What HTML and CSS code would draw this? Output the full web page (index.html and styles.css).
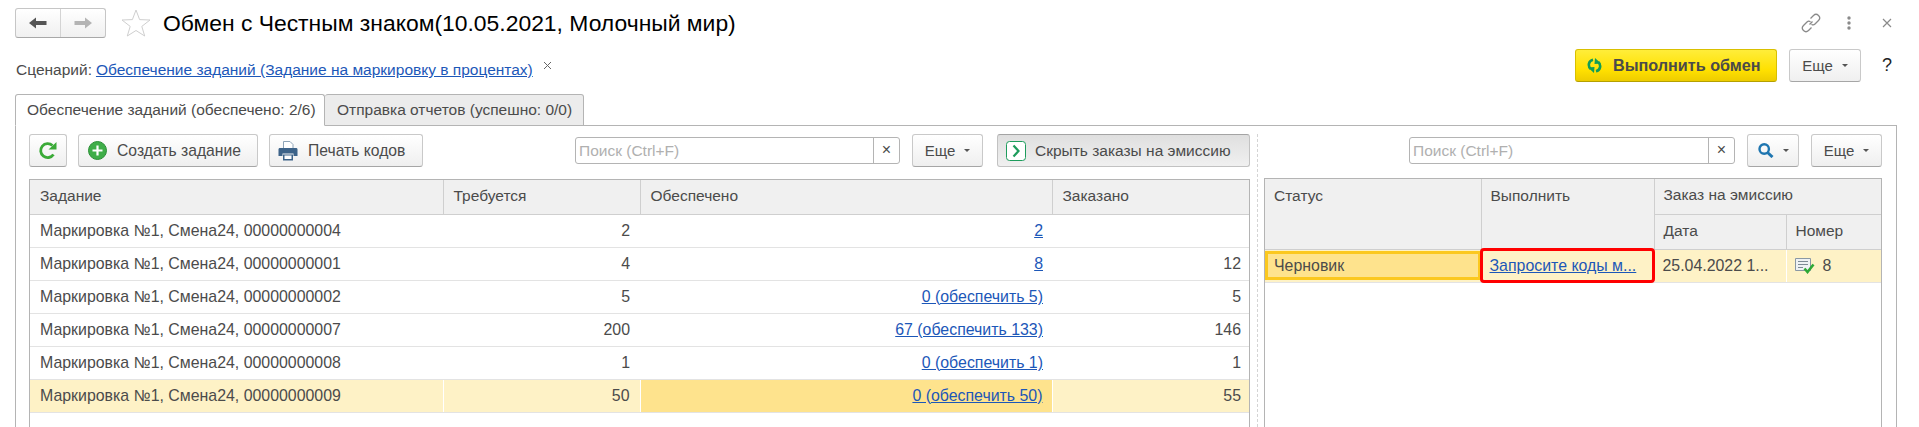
FILE: index.html
```html
<!DOCTYPE html>
<html lang="ru">
<head>
<meta charset="utf-8">
<title>Обмен с Честным знаком</title>
<link rel="stylesheet" href="styles.css">
</head>
<body>

<div class="titlebar">
	<div class="nav">
		<a class="nav-btn" href="#"><svg width="18" height="12" viewBox="0 0 18 12"><path d="M0 6 7 0.5V4H17.500V8H7V11.500Z" fill="#555"/></svg></a>
		<a class="nav-btn" href="#"><svg width="18" height="12" viewBox="0 0 18 12"><path d="M18 6 11 0.5V4H0.500V8H11V11.500Z" fill="#b4b4b4"/></svg></a>
	</div>
	<svg class="star" width="30" height="28" viewBox="0 0 30 28"><path d="M15 1 18.600 10.600 29 11 20.800 17.400 23.700 27 15 21.500 6.300 27 9.200 17.400 1 11 11.400 10.600Z" fill="#fff" stroke="#cfcfcf"/></svg>
	<h1 class="title">Обмен с Честным знаком(10.05.2021, Молочный мир)</h1>
	<div class="win-icons">
		<svg width="20" height="20" viewBox="0 0 20 20" fill="none" stroke="#8a8a8a" stroke-width="1.300"><path d="M8.500 11.500 11.500 8.500M9.500 5.500 12.500 2.500C14 1 16 1 17.500 2.500S19 6 17.500 7.500L14 11C13 12 11.500 12 10.500 11.200M10.500 14.500 7.500 17.500C6 19 4 19 2.500 17.500S1 14 2.500 12.500L6 9C7 8 8.500 8 9.500 8.800"/></svg>
		<svg class="dots" width="4" height="14" viewBox="0 0 4 14" fill="#8a8a8a"><circle cx="2" cy="2" r="1.700"/><circle cx="2" cy="7" r="1.700"/><circle cx="2" cy="12" r="1.700"/></svg>
		<svg class="close" width="10" height="10" viewBox="0 0 10 10" stroke="#8a8a8a" stroke-width="1.200"><path d="M1 1 9 9M9 1 1 9"/></svg>
	</div>
</div>

<div class="scenario">
	<span class="scenario-label">Сценарий:</span>
	<a class="link scenario-link" href="#">Обеспечение заданий (Задание на маркировку в процентах)</a>
	<svg class="scenario-x" width="9" height="9" viewBox="0 0 9 9" stroke="#666"><path d="M1 1 8 8M8 1 1 8"/></svg>
	<a class="btn btn-main" href="#">
		<svg width="15" height="15" viewBox="0 0 15 15" fill="none" stroke="#0f9d58" stroke-width="2.600"><path d="M6 1.800C1.500 2.800 0.500 8 3.800 11"/><path d="M9 13.200C13.500 12.200 14.500 7 11.200 4"/><path d="M1 9.500 7.500 9 7 15Z M14 5.500 7.500 6 8 0Z" fill="#0f9d58" stroke="none"/></svg>
		Выполнить обмен
	</a>
	<a class="btn btn-more btn-top-more" href="#">Еще <i class="caret"></i></a>
	<span class="help">?</span>
</div>

<div class="tabs">
	<a class="tab tab-active" href="#">Обеспечение заданий (обеспечено: 2/6)</a>
	<a class="tab" href="#">Отправка отчетов (успешно: 0/0)</a>
</div>

<div class="panel">
	<div class="pane">
		<div class="toolbar">
			<a class="btn btn-refresh" href="#"><svg width="20" height="20" viewBox="0 0 20 20" fill="none"><path d="M15.500 13.500A7 7 0 1 1 14.500 4.500" stroke="#3bab38" stroke-width="2.800"/><path d="M10.500 8.500H18.500V1Z" fill="#3bab38"/></svg></a>
			<a class="btn btn-create" href="#"><svg width="19" height="19" viewBox="0 0 19 19"><circle cx="9.500" cy="9.500" r="9" fill="#3fae49" stroke="#2b8f36"/><path d="M9.500 4.500V14.500M4.500 9.500H14.500" stroke="#fff" stroke-width="2.200"/></svg>Создать задание</a>
			<a class="btn btn-print" href="#"><svg width="20" height="20" viewBox="0 0 20 20"><path d="M5.500 0.500H12L15 3.500V8H5.500Z" fill="#fff" stroke="#8ea4b8"/><path d="M0.500 8.500C0.500 7.500 1 7 2 7H18C19 7 19.500 7.500 19.500 8.500V15H15.500V12.500H4.500V15H0.500Z" fill="#3d6389"/><path d="M5 13.500H15V19.500H5Z" fill="#3d6389"/><path d="M6.500 14.500H13.500V18H6.500Z" fill="#fff"/></svg>Печать кодов</a>
			<div class="search search-left">
				<span class="search-text">Поиск (Ctrl+F)</span>
				<span class="search-clear">×</span>
			</div>
			<a class="btn btn-more btn-more-left" href="#">Еще <i class="caret"></i></a>
			<a class="btn btn-toggle" href="#"><svg width="20" height="20" viewBox="0 0 20 20" fill="#fff"><rect x="0.500" y="0.500" width="19" height="19" rx="3" stroke="#1d9c5c"/><path d="M7.500 4.500 12.500 10 7.500 15.500" fill="none" stroke="#1d9c5c" stroke-width="2.200"/></svg>Скрыть заказы на эмиссию</a>
		</div>
		<div class="grid-wrap">
			<table class="grid grid-left">
				<colgroup><col class="col-task"><col class="col-need"><col class="col-done"><col class="col-ordered"></colgroup>
				<thead>
					<tr><th>Задание</th><th>Требуется</th><th>Обеспечено</th><th>Заказано</th></tr>
				</thead>
				<tbody>
					<tr><td>Маркировка №1, Смена24, 00000000004</td><td class="num">2</td><td class="num done"><a class="link" href="#">2</a></td><td class="num"></td></tr>
					<tr><td>Маркировка №1, Смена24, 00000000001</td><td class="num">4</td><td class="num done"><a class="link" href="#">8</a></td><td class="num">12</td></tr>
					<tr><td>Маркировка №1, Смена24, 00000000002</td><td class="num">5</td><td class="num done"><a class="link" href="#">0 (обеспечить 5)</a></td><td class="num">5</td></tr>
					<tr><td>Маркировка №1, Смена24, 00000000007</td><td class="num">200</td><td class="num done"><a class="link" href="#">67 (обеспечить 133)</a></td><td class="num">146</td></tr>
					<tr><td>Маркировка №1, Смена24, 00000000008</td><td class="num">1</td><td class="num done"><a class="link" href="#">0 (обеспечить 1)</a></td><td class="num">1</td></tr>
					<tr class="row-current"><td>Маркировка №1, Смена24, 00000000009</td><td class="num">50</td><td class="num done cell-current"><a class="link" href="#">0 (обеспечить 50)</a></td><td class="num">55</td></tr>
				</tbody>
			</table>
		</div>
	</div>

	<div class="splitter"></div>

	<div class="pane">
		<div class="toolbar toolbar-right">
			<div class="search search-right">
				<span class="search-text">Поиск (Ctrl+F)</span>
				<span class="search-clear">×</span>
			</div>
			<a class="btn btn-find" href="#"><svg width="16" height="15" viewBox="0 0 16 15" fill="none" stroke="#1f76b0"><circle cx="6.200" cy="6" r="4.700" stroke-width="2.400"/><path d="M9.500 9.500 14.500 14" stroke-width="3"/></svg><i class="caret"></i></a>
			<a class="btn btn-more btn-more-right" href="#">Еще <i class="caret"></i></a>
		</div>
		<div class="grid-wrap grid-wrap-right">
			<table class="grid grid-right">
				<colgroup><col class="col-status"><col class="col-run"><col class="col-date"><col class="col-number"></colgroup>
				<thead>
					<tr class="head-top"><th rowspan="2" class="th-tall">Статус</th><th rowspan="2" class="th-tall">Выполнить</th><th colspan="2">Заказ на эмиссию</th></tr>
					<tr class="head-sub"><th>Дата</th><th>Номер</th></tr>
				</thead>
				<tbody>
					<tr class="row-current">
						<td class="cell-focus"><div class="focus-box">Черновик</div></td>
						<td class="cell-alert"><a class="link" href="#">Запросите коды м...</a></td>
						<td>25.04.2022 1...</td>
						<td><svg class="doc" width="20" height="16" viewBox="0 0 20 16"><path d="M0.500 0.500H15.500V12.500H0.500Z" fill="#eef1f3" stroke="#8a98a4"/><path d="M3 3.500H13M3 6.500H13M3 9.500H8" stroke="#7d8a94"/><path d="M9.500 10.500 12.500 14 18.500 6.500" fill="none" stroke="#2ea836" stroke-width="2.600"/></svg>8</td>
					</tr>
				</tbody>
			</table>
		</div>
	</div>
</div>

</body>
</html>
```

FILE: styles.css
```css
*{margin:0;padding:0;box-sizing:border-box;}
html,body{height:427px;overflow:hidden;}
body{background:#fff;font-family:"Liberation Sans",Arial,sans-serif;font-size:15.5px;color:#4b4b4b;}
a{text-decoration:none;color:inherit;}
.link{color:#1c57b8;text-decoration:underline;}

.titlebar{display:flex;align-items:center;height:30px;margin:8px 22px 0 15px;}
.nav{display:flex;width:91px;height:30px;border:1px solid #c6c6c6;border-bottom-color:#a8a8a8;border-radius:3px;background:linear-gradient(#fff,#f0f0f0);}
.nav-btn{flex:1;display:flex;align-items:center;justify-content:center;}
.nav-btn+.nav-btn{border-left:1px solid #d4d4d4;}
.star{margin-left:15px;}
.title{margin-left:12px;font-size:22.9px;font-weight:normal;color:#000;}
.win-icons{display:flex;align-items:center;margin-left:auto;}
.dots{margin-left:26px;}
.close{margin-left:31px;margin-right:5px;}

.scenario{display:flex;align-items:center;height:33px;margin:11px 0 0 16px;}
.scenario-label{margin-top:9px;}
.scenario-link{margin:9px 0 0 4px;}
.scenario-x{margin:-1px 0 0 10px;}

.btn{display:flex;align-items:center;justify-content:center;height:33px;border:1px solid #c9c9c9;border-bottom-color:#a6a6a6;border-radius:3px;background:linear-gradient(#fff,#efefef);white-space:nowrap;}
.btn svg{flex:none;}
.btn-main{width:202px;margin-left:auto;padding-left:11px;justify-content:flex-start;border-color:#d9c000;border-bottom-color:#b5a000;background:linear-gradient(#ffed3a,#ffe000 65%,#edcc00);font-size:16.200px;font-weight:bold;color:#4a4a4a;}
.btn-main svg{margin-right:11px;}
.btn-more{font-size:15px;}
.btn-top-more{width:72px;margin-left:12px;}
.help{margin:0 27px 0 21px;font-size:18px;color:#222;}
.caret{display:inline-block;width:0;height:0;margin-left:9px;border:3px solid transparent;border-top:3px solid #555;border-bottom:0;vertical-align:middle;}

.tabs{display:flex;height:32px;margin:12px 0 -1px 15px;}
.tab{display:flex;align-items:center;border:1px solid #b4b4b4;border-radius:3px 3px 0 0;background:#ececec;padding:0 11px;white-space:nowrap;}
.tab-active{width:310px;background:#fff;border-bottom-color:#fff;position:relative;z-index:1;}
.tab+.tab{width:259px;border-left:0;padding-left:12px;}

.panel{display:flex;height:302px;margin:0 22px 0 15px;padding:8px 14px 0 13px;border:1px solid #b4b4b4;border-bottom:0;}
.pane{display:flex;flex-direction:column;width:1221px;}
.pane:last-child{width:618px;}
.splitter{width:14px;}
.splitter::after{content:"";display:block;width:0;height:100%;margin-left:7px;border-left:1px dashed #d4d4d4;}

.toolbar{display:flex;align-items:center;flex:none;height:33px;margin-bottom:12px;}
.btn-refresh{width:38px;}
.btn-create{width:180px;margin-left:11px;padding-left:9px;justify-content:flex-start;font-size:15.700px;}
.btn-create svg{margin-right:10px;}
.btn-print{width:154px;margin-left:11px;padding-left:8px;justify-content:flex-start;font-size:15.700px;}
.btn-print svg{margin-right:10px;}
.search{display:flex;align-items:center;height:27px;border:1px solid #b4b4b4;border-radius:3px;background:#fff;}
.search-left{width:325px;margin-left:auto;}
.search-right{width:326px;margin-left:auto;}
.search-text{flex:1;padding-left:3px;color:#b0b0b0;}
.search-clear{width:26px;height:100%;border-left:1px solid #b4b4b4;text-align:center;line-height:24px;font-size:16px;}
.btn-more-left{width:71px;margin-left:12px;}
.btn-toggle{width:253px;margin-left:14px;padding-left:8px;justify-content:flex-start;border-color:#c2c2c2;border-top-color:#a4a4a4;background:linear-gradient(#dfdfdf,#f0f0f0);}
.btn-toggle svg{margin-right:9px;}
.btn-find{width:52px;margin-left:12px;}
.btn-more-right{width:71px;margin-left:12px;}

.grid-wrap{flex:1;border:solid #b4b4b4;border-width:1px 1px 0;}
.grid-wrap-right{margin-top:-1px;}
.grid{width:100%;border-collapse:collapse;table-layout:fixed;}
.grid th{height:34px;background:#f0f0f0;border-right:1px solid #cfcfcf;border-bottom:1px solid #cfcfcf;padding:0 10px 2px;font-weight:normal;text-align:left;}
.grid th:last-child{border-right:0;}
.grid td{height:33px;border-bottom:1px solid #e3e3e3;padding:0 10px;font-size:15.900px;white-space:nowrap;}
.grid .num{text-align:right;}
.grid .done{padding-right:9px;}
.grid-left td:last-child{padding-right:8px;}
.col-task{width:413px;}
.col-need{width:197px;}
.col-done{width:412px;}
.col-status{width:216px;}
.col-run{width:173px;}
.col-date{width:132px;}
.row-current td{background:#fef2c6;border-right:1px solid #fff;}
.row-current td:last-child{border-right:0;}
.grid td.cell-current{background:#fee38d;}

.grid-right th{height:35px;padding-left:9px;}
.grid-right .head-sub th{padding-bottom:2px;}
.grid-right td{padding-left:8px;}
.grid .th-tall{vertical-align:top;padding-top:8px;}
.grid td.cell-focus{padding:0;}
.focus-box{display:flex;align-items:center;height:29px;background:#fee38d;border:3px solid #fbc81f;padding-left:6px;}
.grid td.cell-alert{outline:3px solid #f00;outline-offset:-2px;border-radius:3px;}
.doc{margin-right:8px;vertical-align:middle;}
```
